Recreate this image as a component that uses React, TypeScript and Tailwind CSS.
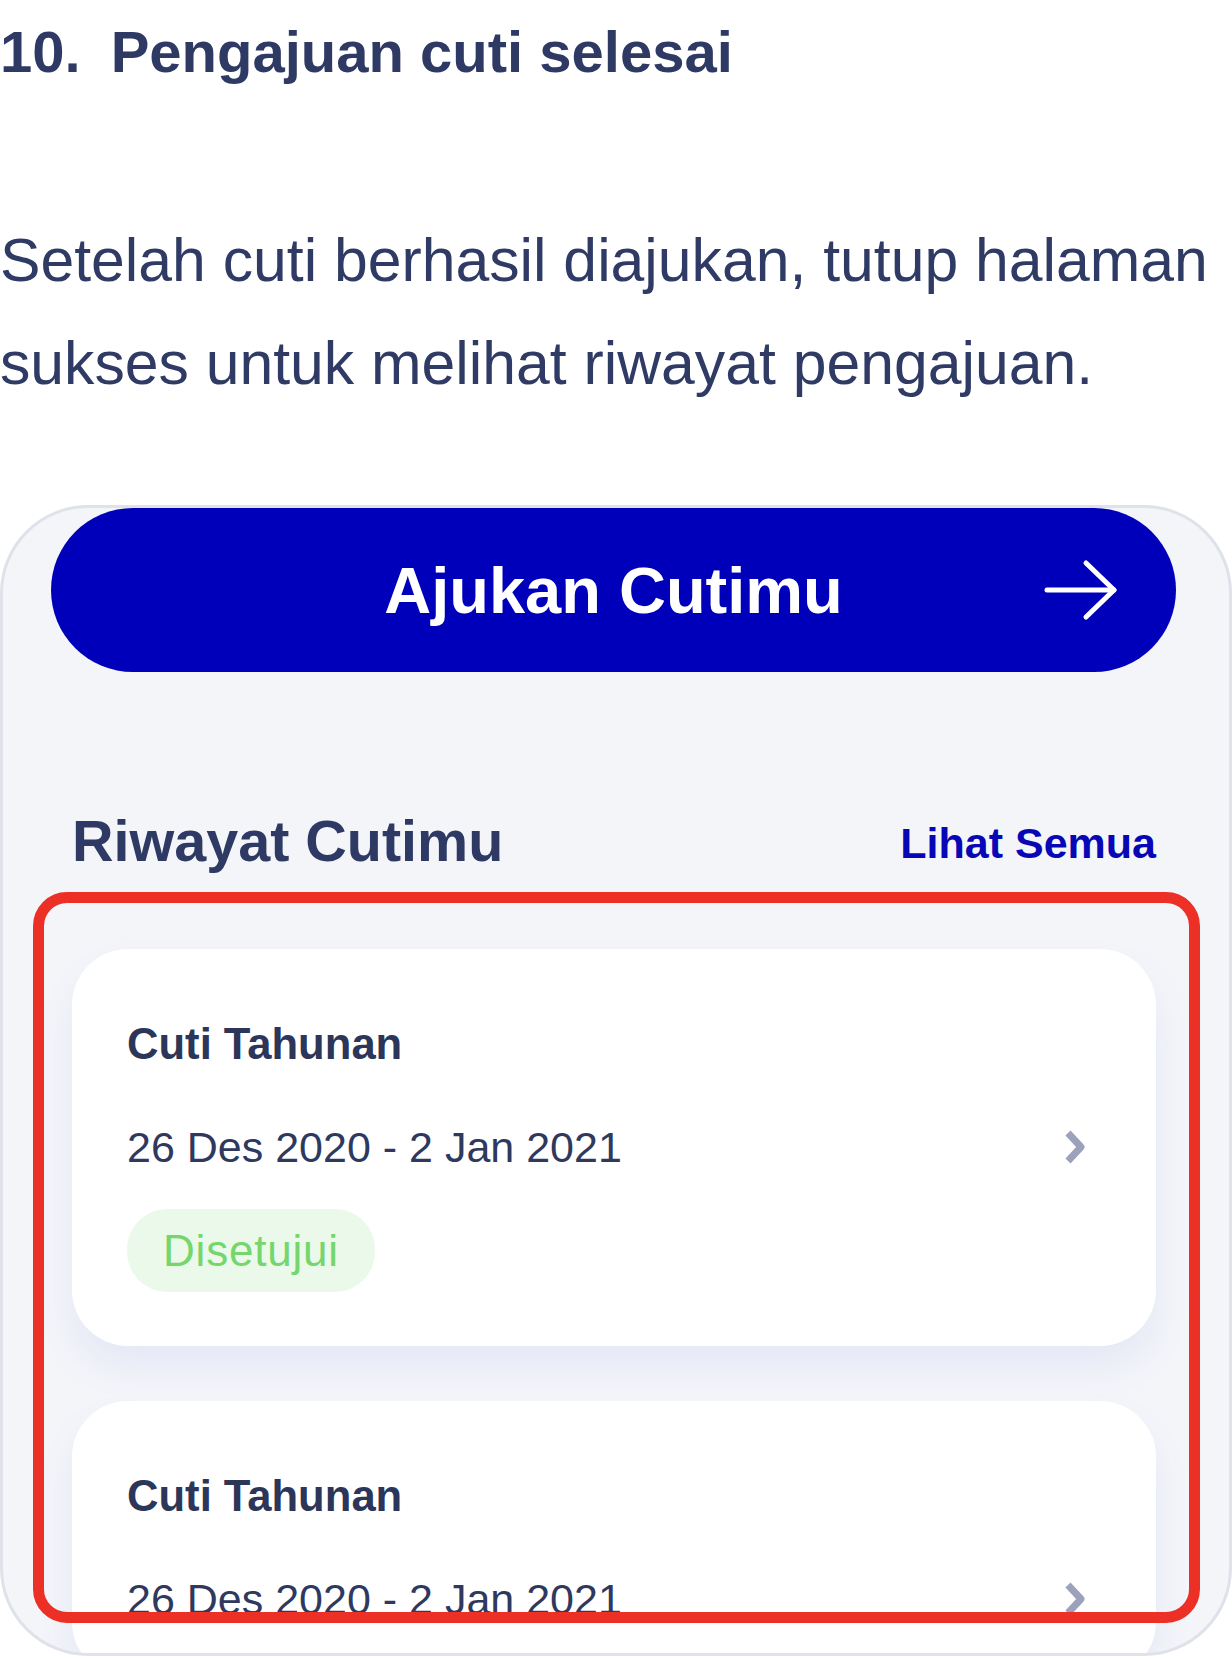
import React from 'react';

const font = { fontFamily: '"Liberation Sans", Arial, sans-serif' };

// Arrow in the pill button
const ArrowIcon: React.FC = () => (
  <svg width="74" height="62" viewBox="0 0 74 62" fill="none">
    <path d="M3 31H70" stroke="#ffffff" strokeWidth="5" strokeLinecap="round" />
    <path d="M42 4L70 31L42 58" stroke="#ffffff" strokeWidth="5" strokeLinecap="round" strokeLinejoin="round" />
  </svg>
);

const ChevronIcon: React.FC = () => (
  <svg width="22" height="36" viewBox="0 0 22 36" fill="none">
    <path d="M4 4L17 18L4 32" stroke="#9da2bc" strokeWidth="7" strokeLinejoin="round" />
  </svg>
);

interface LeaveCardProps {
  title: string;
  period: string;
  status?: string;
}

const LeaveCard: React.FC<LeaveCardProps> = ({ title, period, status }) => (
  <div className="bg-white rounded-[56px] pl-[55px] pr-[70px] pt-[70px] pb-[54px] shadow-[0_22px_36px_rgba(90,110,220,0.09)]">
    <div className="text-[43.6px] leading-[50px] font-bold text-[#2c3659]">{title}</div>
    <div className="mt-[53px] flex items-center justify-between">
      <span className="text-[43px] leading-[50px] text-[#2e395d]">{period}</span>
      <ChevronIcon />
    </div>
    {status && (
      <div className="mt-[37px] inline-flex h-[83px] items-center rounded-[40px] bg-[#ebf9ea] px-[36px]">
        <span className="text-[44px] leading-[83px] tracking-[0.8px] text-[#74d66c]">{status}</span>
      </div>
    )}
  </div>
);

export default function App() {
  return (
    <div className="w-[1232px] bg-white" style={font}>
      {/* Step heading */}
      <div className="pt-[18px] flex gap-[30px] text-[58px] leading-[68px] font-bold text-[#2e3a64]">
        <span>10.</span>
        <span>Pengajuan cuti selesai</span>
      </div>

      <p className="mt-[123px] text-[60.7px] leading-[103px] text-[#2f3b65]">
        Setelah cuti berhasil diajukan, tutup halaman sukses untuk melihat riwayat pengajuan.
      </p>

      {/* Phone screenshot */}
      <div className="relative mt-[90px] h-[1151px] overflow-hidden rounded-[88px] border-[3px] border-[#e0e2ea] bg-[#f4f5f9]">
        <button className="ml-[48px] mr-[53px] grid h-[164px] w-[1125px] grid-cols-[1fr_auto_1fr] items-center rounded-full bg-[#0000bb]">
          <span />
          <span className="text-[65px] leading-[75px] font-bold text-white">Ajukan Cutimu</span>
          <span className="flex justify-end pr-[58px]">
            <ArrowIcon />
          </span>
        </button>

        <div className="mt-[135px] ml-[69px] mr-[73px] flex items-start justify-between">
          <span className="text-[57.5px] leading-[68px] font-bold text-[#2e3a63]">Riwayat Cutimu</span>
          <span className="pt-[2px] text-[43px] leading-[68px] font-bold text-[#0707b6]">Lihat Semua</span>
        </div>

        <div className="mt-[72px] ml-[69px] mr-[73px] flex flex-col gap-[55px]">
          <LeaveCard title="Cuti Tahunan" period="26 Des 2020 - 2 Jan 2021" status="Disetujui" />
          <LeaveCard title="Cuti Tahunan" period="26 Des 2020 - 2 Jan 2021" />
        </div>

        {/* Red highlight annotation */}
        <div className="absolute left-[30px] top-[384px] h-[731px] w-[1167px] rounded-[34px] border-[11px] border-[#ec3025]" />
      </div>
    </div>
  );
}
